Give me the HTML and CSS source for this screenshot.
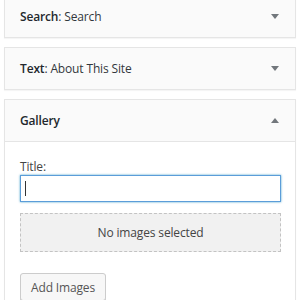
FILE: index.html
```html
<!DOCTYPE html>
<html>
<head>
<meta charset="utf-8">
<link rel="stylesheet" href="styles.css">
</head>
<body>
<div class="widgets">
  <div class="widget">
    <div class="widget-top">
      <h3 class="widget-title">Search<span class="in-title">: Search</span></h3>
      <span class="arrow down"></span>
    </div>
  </div>
  <div class="widget">
    <div class="widget-top">
      <h3 class="widget-title">Text<span class="in-title">: About This Site</span></h3>
      <span class="arrow down"></span>
    </div>
  </div>
  <div class="widget open">
    <div class="widget-top">
      <h3 class="widget-title">Gallery</h3>
      <span class="arrow up"></span>
    </div>
    <div class="widget-inside">
      <label class="field-label" for="title">Title:</label>
      <div class="input-wrap">
        <input id="title" class="text-input" type="text">
        <span class="caret"></span>
      </div>
      <div class="media-empty">No images selected</div>
      <button class="button" type="button">Add Images</button>
    </div>
  </div>
</div>
</body>
</html>
```
FILE: styles.css
```css
html, body {
  margin: 0;
  padding: 0;
  background: #fff;
  overflow: hidden;
}
body {
  font-family: "Open Sans", "Noto Sans", sans-serif;
  font-size: 13px;
  color: #23282d;
  letter-spacing: -0.15px;
}
.widgets {
  width: 292px;
  margin: -5px 0 0 4px;
  display: flex;
  flex-direction: column;
  gap: 9px;
}
.widget {
  border: 1px solid #e5e5e5;
  box-shadow: 0 1px 1px rgba(0,0,0,.04);
  background: #fff;
}
.widget-top {
  height: 41px;
  background: #fafafa;
  display: flex;
  align-items: center;
  justify-content: space-between;
  padding: 0 16px 0 15px;
}
.widget.open .widget-top {
  border-bottom: 1px solid #e5e5e5;
}
.widget-title {
  margin: 0;
  font-size: 12px;
  font-weight: 600;
  color: #23282d;
}
.in-title {
  font-weight: 400;
  color: #32373c;
}
.arrow {
  width: 0;
  height: 0;
  border-left: 4px solid transparent;
  border-right: 4px solid transparent;
}
.arrow.down {
  border-top: 5px solid #72777c;
}
.arrow.up {
  border-bottom: 5px solid #72777c;
}
.widget-inside {
  padding: 16px 14px 20px 15px;
  display: flex;
  flex-direction: column;
  align-items: flex-start;
  height: 160px;
}
.field-label {
  font-size: 12px;
  line-height: 17px;
  color: #444;
}
.input-wrap {
  position: relative;
  align-self: stretch;
}
.text-input {
  display: block;
  box-sizing: border-box;
  width: 100%;
  height: 27px;
  margin: 0;
  border: 1px solid #5b9dd9;
  box-shadow: 0 0 2px rgba(30,140,190,.8);
  outline: none;
  background: #fff;
  padding: 0 5px;
  font: inherit;
}
.caret {
  position: absolute;
  left: 5px;
  top: 6px;
  width: 1px;
  height: 15px;
  background: #333;
}
.media-empty {
  align-self: stretch;
  box-sizing: border-box;
  margin-top: 11px;
  height: 39px;
  border: 1px dashed #c3c3c3;
  background: #f1f1f1;
  display: flex;
  align-items: center;
  justify-content: center;
  font-size: 12px;
  color: #444;
}
.button {
  margin-top: 21px;
  height: 28px;
  padding: 0 10px;
  border: 1px solid #ccc;
  border-radius: 3px;
  background: #f7f7f7;
  box-shadow: 0 1px 0 #ccc;
  font-family: inherit;
  font-size: 12px;
  letter-spacing: -0.15px;
  color: #555;
}
```
